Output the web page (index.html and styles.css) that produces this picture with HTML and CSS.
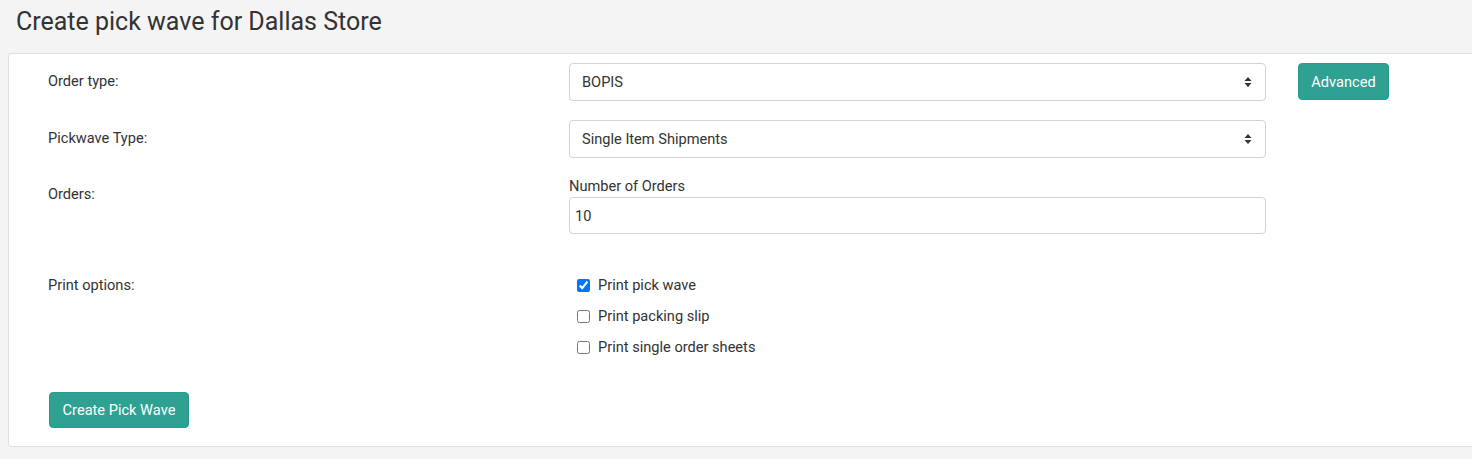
FILE: index.html
```html
<!DOCTYPE html>
<html lang="en">
<head>
<meta charset="utf-8">
<title>Create pick wave for Dallas Store</title>
<link rel="stylesheet" href="styles.css">
</head>
<body>
<h1 class="page-title">Create pick wave for Dallas Store</h1>
<div class="card">
  <div class="form-row row-order-type">
    <div class="row-label">Order type:</div>
    <div class="select-wrap">
      <select class="form-select"><option>BOPIS</option></select>
      <svg class="select-arrow" width="8" height="12" viewBox="0 0 8 12"><path d="M4 1 L7.5 5 H0.5 Z M4 11 L0.5 7 H7.5 Z" fill="#333"/></svg>
    </div>
    <button class="btn btn-advanced" type="button">Advanced</button>
  </div>
  <div class="form-row row-pickwave">
    <div class="row-label">Pickwave Type:</div>
    <div class="select-wrap">
      <select class="form-select"><option>Single Item Shipments</option></select>
      <svg class="select-arrow" width="8" height="12" viewBox="0 0 8 12"><path d="M4 1 L7.5 5 H0.5 Z M4 11 L0.5 7 H7.5 Z" fill="#333"/></svg>
    </div>
  </div>
  <div class="form-row row-orders">
    <div class="row-label">Orders:</div>
    <div class="field">
      <label class="field-label">Number of Orders</label>
      <input class="form-input" type="text" value="10">
    </div>
  </div>
  <div class="form-row row-print">
    <div class="row-label">Print options:</div>
    <div class="checks">
      <label class="check"><input type="checkbox" checked><span>Print pick wave</span></label>
      <label class="check"><input type="checkbox"><span>Print packing slip</span></label>
      <label class="check"><input type="checkbox"><span>Print single order sheets</span></label>
    </div>
  </div>
  <div class="actions">
    <button class="btn btn-create" type="button">Create Pick Wave</button>
  </div>
</div>
</body>
</html>
```

FILE: styles.css
```css
html, body {
  margin: 0;
  padding: 0;
  background: #f4f4f4;
  overflow: hidden;
}
body {
  font-family: Roboto, "Liberation Sans", Arial, sans-serif;
  font-size: 14.6px;
  line-height: 21px;
  color: #333;
}
.page-title {
  margin: 7px 0 17px 16px;
  font-size: 25px;
  font-weight: 400;
  line-height: 29px;
  color: #333;
}
.card {
  margin-left: 8px;
  margin-right: -20px;
  background: #fff;
  border: 1px solid #e0e0e0;
  border-radius: 3px;
  padding: 9px 0 18px 39px;
}
.form-row {
  display: grid;
  grid-template-columns: 521px 697px auto;
  align-items: start;
}
.row-label {
  padding-top: 8px;
  color: #333;
}
.row-order-type { margin-bottom: 19px; }
.row-pickwave { margin-bottom: 18px; }
.row-orders { margin-bottom: 31px; }
.row-orders .row-label { padding-top: 8px; }
.row-print .row-label { padding-top: 10px; }

.select-wrap {
  position: relative;
}
.form-select {
  appearance: none;
  -webkit-appearance: none;
  display: block;
  width: 100%;
  height: 38px;
  box-sizing: border-box;
  border: 1px solid #ced4da;
  border-radius: 4px;
  background: #fff;
  padding: 0 30px 0 12px;
  font-family: inherit;
  font-size: 14.6px;
  color: #333;
}
.select-arrow {
  position: absolute;
  right: 14px;
  top: 13px;
}
.field-label {
  display: block;
  line-height: 21px;
  color: #333;
}
.form-input {
  display: block;
  width: 100%;
  height: 37px;
  box-sizing: border-box;
  border: 1px solid #ced4da;
  border-radius: 4px;
  padding: 0 5px;
  font-family: inherit;
  font-size: 14.6px;
  color: #333;
  background: #fff;
}
.checks {
  display: flex;
  flex-direction: column;
  gap: 10px;
  padding-top: 10px;
  padding-left: 8px;
}
.check {
  display: flex;
  align-items: center;
  line-height: 21px;
  color: #333;
}
.check input {
  width: 13px;
  height: 13px;
  margin: 0 8px 0 0;
  accent-color: #0075ff;
}
.btn {
  font-family: inherit;
  font-size: 14.6px;
  color: #fff;
  background: #2ea192;
  border: 1px solid #2a9a8b;
  border-radius: 4px;
  cursor: pointer;
  padding: 0;
}
.btn-advanced {
  width: 91px;
  height: 37px;
  margin-left: 32px;
}
.actions {
  margin-top: 34px;
  padding-left: 1px;
}
.btn-create {
  width: 140px;
  height: 36px;
}
```
